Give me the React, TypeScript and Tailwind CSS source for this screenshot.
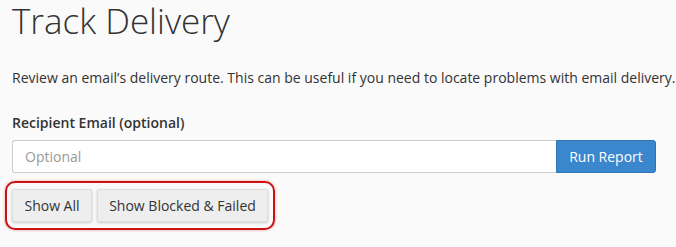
import { useState } from "react";

export default function App() {
  const [email, setEmail] = useState("");

  return (
    <div
      className="min-h-screen bg-[#fafafa] px-3 text-[#333]"
      style={{ fontFamily: '"Open Sans", "Liberation Sans", sans-serif' }}
    >
      <h1 className="text-[35px] font-light leading-[42px]">Track Delivery</h1>

      <p className="mt-[26px] whitespace-nowrap text-[14px] leading-[20px]">
        Review an email’s delivery route. This can be useful if you need to locate problems with email delivery.
      </p>

      <div className="mt-[25px]">
        <label className="block text-[14px] font-semibold leading-[20px]">Recipient Email (optional)</label>
        <div className="mt-[7px] flex w-[644px]">
          <input
            value={email}
            onChange={(e) => setEmail(e.target.value)}
            placeholder="Optional"
            className="h-[33px] flex-1 rounded-l-[3px] border border-r-0 border-[#ccc] bg-white px-3 text-[14px] outline-none placeholder:text-[#999]"
          />
          <button className="h-[33px] w-[100px] rounded-r-[3px] border border-[#2f75b5] bg-[#3a87cd] text-[14px] text-white">
            Run Report
          </button>
        </div>
      </div>

      <div className="ml-[-7px] mt-[8px] inline-flex gap-[5px] rounded-[10px] border-2 border-[#cc1111] px-[5px] py-[6px] shadow-[0_0_3px_rgba(204,17,17,0.4)]">
        <button className="h-[33px] w-[80px] rounded-[2px] border border-[#ddd] bg-[#eee] text-[14px] shadow-[0_1px_3px_rgba(0,0,0,0.2)]">
          Show All
        </button>
        <button className="h-[33px] w-[171px] rounded-[2px] border border-[#ddd] bg-[#eee] text-[14px] shadow-[0_1px_3px_rgba(0,0,0,0.2)]">
          Show Blocked &amp; Failed
        </button>
      </div>
    </div>
  );
}
